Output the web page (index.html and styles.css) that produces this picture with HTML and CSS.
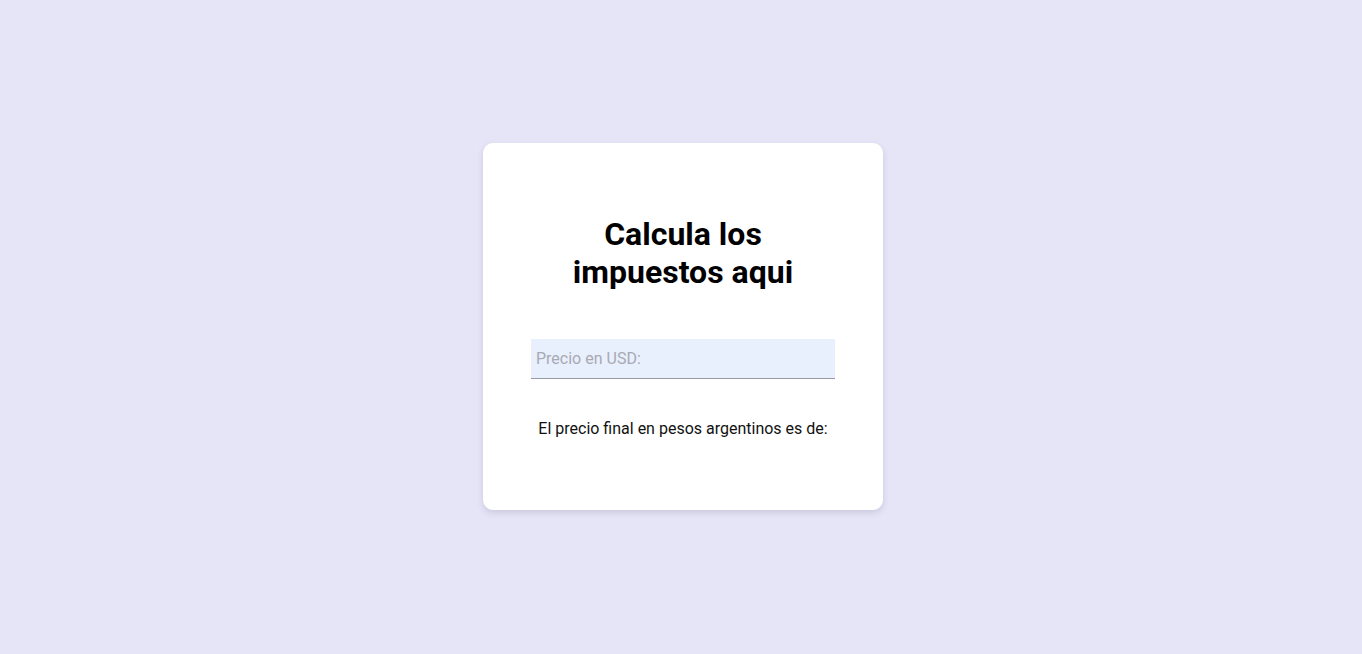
FILE: index.html
```html
<!DOCTYPE html>
<html lang="es">
<head>
<meta charset="utf-8">
<title>Calculadora de impuestos</title>
<link rel="stylesheet" href="styles.css">
</head>
<body>
<main class="page">
  <section class="card">
    <h1 class="title">Calcula los impuestos aqui</h1>
    <input class="price-input" type="text" placeholder="Precio en USD:">
    <p class="result">El precio final en pesos argentinos es de:</p>
  </section>
</main>
</body>
</html>
```
FILE: styles.css
```css
html, body {
  margin: 0;
  padding: 0;
  height: 100%;
}
body {
  background: #e6e5f7;
  font-family: Roboto, "Liberation Sans", sans-serif;
}
.page {
  min-height: 100%;
  display: flex;
  align-items: center;
  justify-content: center;
}
.card {
  box-sizing: border-box;
  width: 400px;
  background: #fff;
  border-radius: 10px;
  box-shadow: 0 3px 6px rgba(80, 80, 120, 0.18);
  padding: 72px 48px 72px;
  display: flex;
  flex-direction: column;
  align-items: stretch;
  text-align: center;
  margin-top: -1px;
  margin-left: 4px;
}
.title {
  margin: 0 0 48px;
  font-size: 32px;
  line-height: 38px;
  font-weight: 700;
  color: #000;
}
.price-input {
  box-sizing: border-box;
  height: 40px;
  width: 100%;
  border: none;
  border-bottom: 1px solid #9a9aa6;
  background: #e8f0fe;
  padding: 0 5px;
  font-family: inherit;
  font-size: 16px;
  color: #000;
  outline: none;
}
.price-input::placeholder {
  color: #a9a9b2;
}
.result {
  margin: 40px 0 0;
  font-size: 16px;
  line-height: 19px;
  color: #111;
}
```
